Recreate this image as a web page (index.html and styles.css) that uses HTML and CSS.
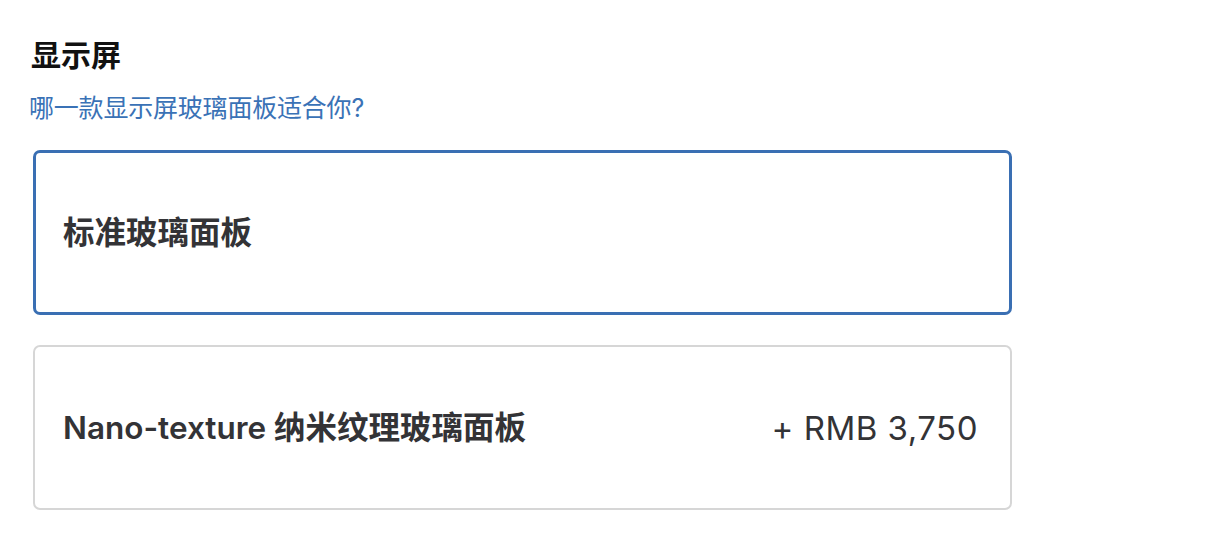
FILE: index.html
```html
<!DOCTYPE html>
<html lang="zh-CN">
<head>
<meta charset="utf-8">
<title>显示屏</title>
<link rel="stylesheet" href="styles.css">
</head>
<body>
<section class="display">
  <h2 class="title">显示屏</h2>
  <a class="help" href="#">哪一款显示屏玻璃面板适合你?</a>
  <div class="options">
    <label class="option selected">
      <span class="name">标准玻璃面板</span>
    </label>
    <label class="option">
      <span class="name">Nano-texture 纳米纹理玻璃面板</span>
      <span class="price">+ RMB 3,750</span>
    </label>
  </div>
</section>
</body>
</html>
```
FILE: styles.css
```css
html, body {
  margin: 0;
  padding: 0;
  background: #ffffff;
}
body {
  font-family: Inter, "Noto Sans CJK SC", "Noto Sans", sans-serif;
  color: #1d1d1f;
}
.display {
  width: 981px;
  padding: 37px 0 0 31px;
  display: flex;
  flex-direction: column;
}
.title {
  margin: 0;
  font-size: 30px;
  line-height: 36px;
  font-weight: 700;
  color: #111111;
}
.help {
  margin-top: 20px;
  font-size: 25px;
  line-height: 30px;
  letter-spacing: -0.2px;
  color: #3a72b6;
  text-decoration: none;
  align-self: flex-start;
  margin-left: -2px;
}
.options {
  margin-top: 27px;
  display: flex;
  flex-direction: column;
  gap: 30px;
  padding-left: 2px;
}
.option {
  box-sizing: border-box;
  height: 165px;
  border: 2px solid #d6d6d6;
  border-radius: 7px;
  display: flex;
  align-items: center;
  justify-content: space-between;
  padding: 0 32px 5px 28px;
}
.option.selected {
  border: 3px solid #3a6fb3;
  padding-left: 27px;
}
.name {
  font-size: 31.5px;
  font-weight: 600;
  color: #333336;
}
.price {
  padding-top: 6px;
  font-size: 33px;
  letter-spacing: 0.5px;
  font-weight: 400;
  color: #333336;
}
```
